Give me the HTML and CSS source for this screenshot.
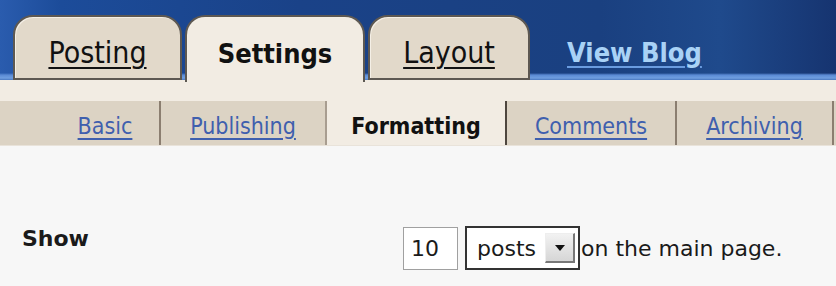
FILE: index.html
```html
<!DOCTYPE html>
<html>
<head>
<meta charset="utf-8">
<link rel="stylesheet" href="styles.css">
</head>
<body>
<div class="header">
  <div class="tabs">
    <a class="tab tab-posting" href="#">Posting</a>
    <span class="tab tab-settings active">Settings</span>
    <a class="tab tab-layout" href="#">Layout</a>
    <a class="viewblog" href="#">View Blog</a>
  </div>
</div>
<div class="band"></div>
<div class="subnav">
  <div class="sub sub-basic"><a href="#">Basic</a></div>
  <div class="sub sub-publishing"><a href="#">Publishing</a></div>
  <div class="sub sub-formatting current"><span>Formatting</span></div>
  <div class="sub sub-comments"><a href="#">Comments</a></div>
  <div class="sub sub-archiving"><a href="#">Archiving</a></div>
</div>
<div class="content">
  <div class="row">
    <div class="label">Show</div>
    <div class="num">10</div>
    <div class="select"><span class="sel-text">posts</span><span class="sel-btn"><svg width="12" height="8" viewBox="0 0 12 8"><path d="M1 1 L11 1 L6 7 Z" fill="#111"/></svg></span></div>
    <div class="after">on the main page.</div>
  </div>
</div>
</body>
</html>
```
FILE: styles.css
```css
* { box-sizing: border-box; }
body {
  margin: 0;
  width: 836px;
  height: 286px;
  overflow: hidden;
  background: #f7f7f7;
  font-family: "DejaVu Sans Condensed", "DejaVu Sans", sans-serif;
}
.header {
  height: 80px;
  background:
    linear-gradient(to bottom, rgba(0,0,0,0) 0, rgba(0,0,0,0) 73px, #5a8ad4 75px, #6f9ee0 78px, #4a78c0 80px),
    linear-gradient(to right, #2a5cae 0, #1c4c9a 60px, #1a4288 300px, #1a4080 600px, #1f4a8c 720px, #163470 836px);
}
.tabs {
  display: flex;
  align-items: flex-end;
  height: 80px;
  padding-left: 13px;
  gap: 3px;
}
.tab {
  display: flex;
  align-items: center;
  justify-content: center;
  height: 65px;
  padding-top: 10px;
  background: #e2d9ca;
  border: 2px solid #5d5852;
  border-radius: 20px 20px 0 0;
  box-shadow: inset 1px 1px 0 #f4efe6;
  color: #111;
  font-size: 30px;
  text-decoration: underline;
  text-decoration-thickness: 2px;
  text-underline-offset: 4px;
}
.tab-posting { width: 169px; }
.tab-settings { width: 180px; }
.tab-layout { width: 162px; }
.tab.active {
  height: 67px;
  margin-bottom: -2px;
  padding-top: 8px;
  background: #f2ece3;
  border-bottom: none;
  font-size: 27px;
  font-weight: bold;
  text-decoration: none;
  position: relative;
  z-index: 1;
}
.viewblog {
  align-self: center;
  margin-left: 34px;
  margin-top: 24px;
  color: #a9d2f6;
  font-size: 27px;
  font-weight: bold;
  text-decoration: underline;
  text-decoration-color: #6a9ce0;
  text-decoration-thickness: 2px;
  text-underline-offset: 4px;
}
.band {
  height: 21px;
  background: #f2ece3;
}
.subnav {
  display: flex;
  height: 45px;
  background: #dcd3c4;
  padding-left: 51px;
  border-bottom: 1px solid #e9e3da;
}
.sub {
  display: flex;
  align-items: center;
  justify-content: center;
  font-size: 23px;
  padding-top: 5px;
  border-right: 2px solid #8b7e70;
}
.sub a {
  color: #3f5fae;
  text-decoration: underline;
  text-decoration-thickness: 2px;
  text-underline-offset: 4px;
}
.sub-basic { width: 110px; }
.sub-publishing { width: 166px; border-right-color: #a89d90; }
.sub-formatting { width: 180px; border-right-color: #4e463e; }
.sub-comments { width: 170px; }
.sub-archiving { width: 157px; }
.sub.current {
  background: #f2ece3;
  font-weight: bold;
  color: #111;
}
.content {
  padding-top: 80px;
}
.row {
  display: flex;
  align-items: center;
  padding-left: 22px;
  font-family: "DejaVu Sans", sans-serif;
  font-size: 22px;
  color: #1a1a1a;
}
.label {
  width: 381px;
  font-weight: bold;
  margin-top: -20px;
}
.num {
  width: 55px;
  height: 43px;
  border: 1px solid #a0a0a0;
  background: #fff;
  padding-left: 7px;
  display: flex;
  align-items: center;
}
.select {
  margin-left: 7px;
  width: 115px;
  height: 44px;
  border: 2px solid #333;
  background: #fff;
  display: flex;
  align-items: center;
  justify-content: space-between;
  padding: 0 3px 0 10px;
}
.sel-btn {
  width: 30px;
  height: 30px;
  background: linear-gradient(#f2f2f2, #d6d6d6);
  border-right: 2px solid #777;
  border-bottom: 2px solid #777;
  border-top: 1px solid #eee;
  border-left: 1px solid #eee;
  display: flex;
  align-items: center;
  justify-content: center;
}
.after {
  margin-left: 1px;
}
```
